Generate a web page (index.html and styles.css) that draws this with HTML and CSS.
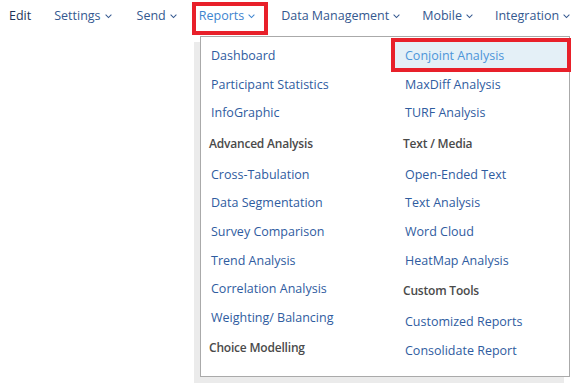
FILE: index.html
```html
<!DOCTYPE html>
<html>
<head>
<meta charset="utf-8">
<link rel="stylesheet" href="styles.css">
</head>
<body>
<nav class="nav">
  <span class="nav-item nav-edit">Edit</span>
  <span class="nav-item nav-settings">Settings <svg class="chev" viewBox="0 0 8 5"><polyline points="0.7,0.7 4,4 7.3,0.7"/></svg></span>
  <span class="nav-item nav-send">Send <svg class="chev" viewBox="0 0 8 5"><polyline points="0.7,0.7 4,4 7.3,0.7"/></svg></span>
  <span class="nav-item nav-active">Reports <svg class="chev" viewBox="0 0 8 5"><polyline points="0.7,0.7 4,4 7.3,0.7"/></svg></span>
  <span class="nav-item">Data Management <svg class="chev" viewBox="0 0 8 5"><polyline points="0.7,0.7 4,4 7.3,0.7"/></svg></span>
  <span class="nav-item nav-mobile">Mobile <svg class="chev" viewBox="0 0 8 5"><polyline points="0.7,0.7 4,4 7.3,0.7"/></svg></span>
  <span class="nav-item">Integration <svg class="chev" viewBox="0 0 8 5"><polyline points="0.7,0.7 4,4 7.3,0.7"/></svg></span>
</nav>
<div class="menu">
  <ul class="col">
    <li class="item">Dashboard</li>
    <li class="item">Participant Statistics</li>
    <li class="item">InfoGraphic</li>
    <li class="head">Advanced Analysis</li>
    <li class="item">Cross-Tabulation</li>
    <li class="item">Data Segmentation</li>
    <li class="item">Survey Comparison</li>
    <li class="item">Trend Analysis</li>
    <li class="item">Correlation Analysis</li>
    <li class="item">Weighting/ Balancing</li>
    <li class="head">Choice Modelling</li>
  </ul>
  <ul class="col">
    <li class="item item-hl">Conjoint Analysis</li>
    <li class="item">MaxDiff Analysis</li>
    <li class="item">TURF Analysis</li>
    <li class="head">Text / Media</li>
    <li class="item">Open-Ended Text</li>
    <li class="item">Text Analysis</li>
    <li class="item">Word Cloud</li>
    <li class="item">HeatMap Analysis</li>
    <li class="head">Custom Tools</li>
    <li class="item">Customized Reports</li>
    <li class="item">Consolidate Report</li>
  </ul>
</div>
</body>
</html>
```
FILE: styles.css
```css
* { box-sizing: border-box; }
body {
  margin: 0;
  background: #fff;
  font-family: "Open Sans", "Noto Sans", sans-serif;
  font-size: 12.5px;
  position: relative;
  width: 586px;
  height: 387px;
  overflow: hidden;
}
.nav {
  display: flex;
  align-items: center;
  height: 34px;
  margin-top: 1px;
  padding-left: 9px;
  color: #34588f;
}
.nav-item {
  display: flex;
  align-items: center;
  gap: 4px;
  height: 33px;
  padding-bottom: 5px;
  margin-right: 22px;
  white-space: nowrap;
}
.nav-edit { color: #1e3557; margin-right: 23px; }
.nav-settings { margin-right: 25px; }
.nav-send { margin-right: 15px; }
.nav-mobile { margin-right: 22px; }
.nav-active {
  color: #3d84cf;
  border: 4px solid #e8202a;
  padding: 0 9px 5px 3px;
  margin-right: 13px;
}
.chev {
  width: 7px;
  height: 4.4px;
  margin-top: 2px;
  fill: none;
  stroke: currentColor;
  stroke-width: 1.15;
}
.menu {
  position: absolute;
  left: 200px;
  top: 36px;
  width: 370px;
  height: 341px;
  border: 1px solid #aaa;
  background: #fff;
  box-shadow: -6px 6px 0 #ebebeb;
  display: grid;
  grid-template-columns: 194px 172px;
  padding-top: 5px;
}
.col {
  list-style: none;
  margin: 0;
  padding: 0;
}
.item {
  height: 26px;
  line-height: 27px;
  margin-bottom: 2.7px;
  padding-left: 10px;
  color: #2f5c9f;
  white-space: nowrap;
}
.head {
  height: 26px;
  line-height: 27px;
  margin-top: 4.3px;
  margin-bottom: 5px;
  padding-left: 8px;
  font-weight: 600;
  font-size: 12px;
  letter-spacing: -0.2px;
  color: #4a4a4a;
  white-space: nowrap;
}
.item-hl {
  background: #e4f0f7;
  color: #4c95d9;
  outline: 4px solid #e8202a;
}
```
